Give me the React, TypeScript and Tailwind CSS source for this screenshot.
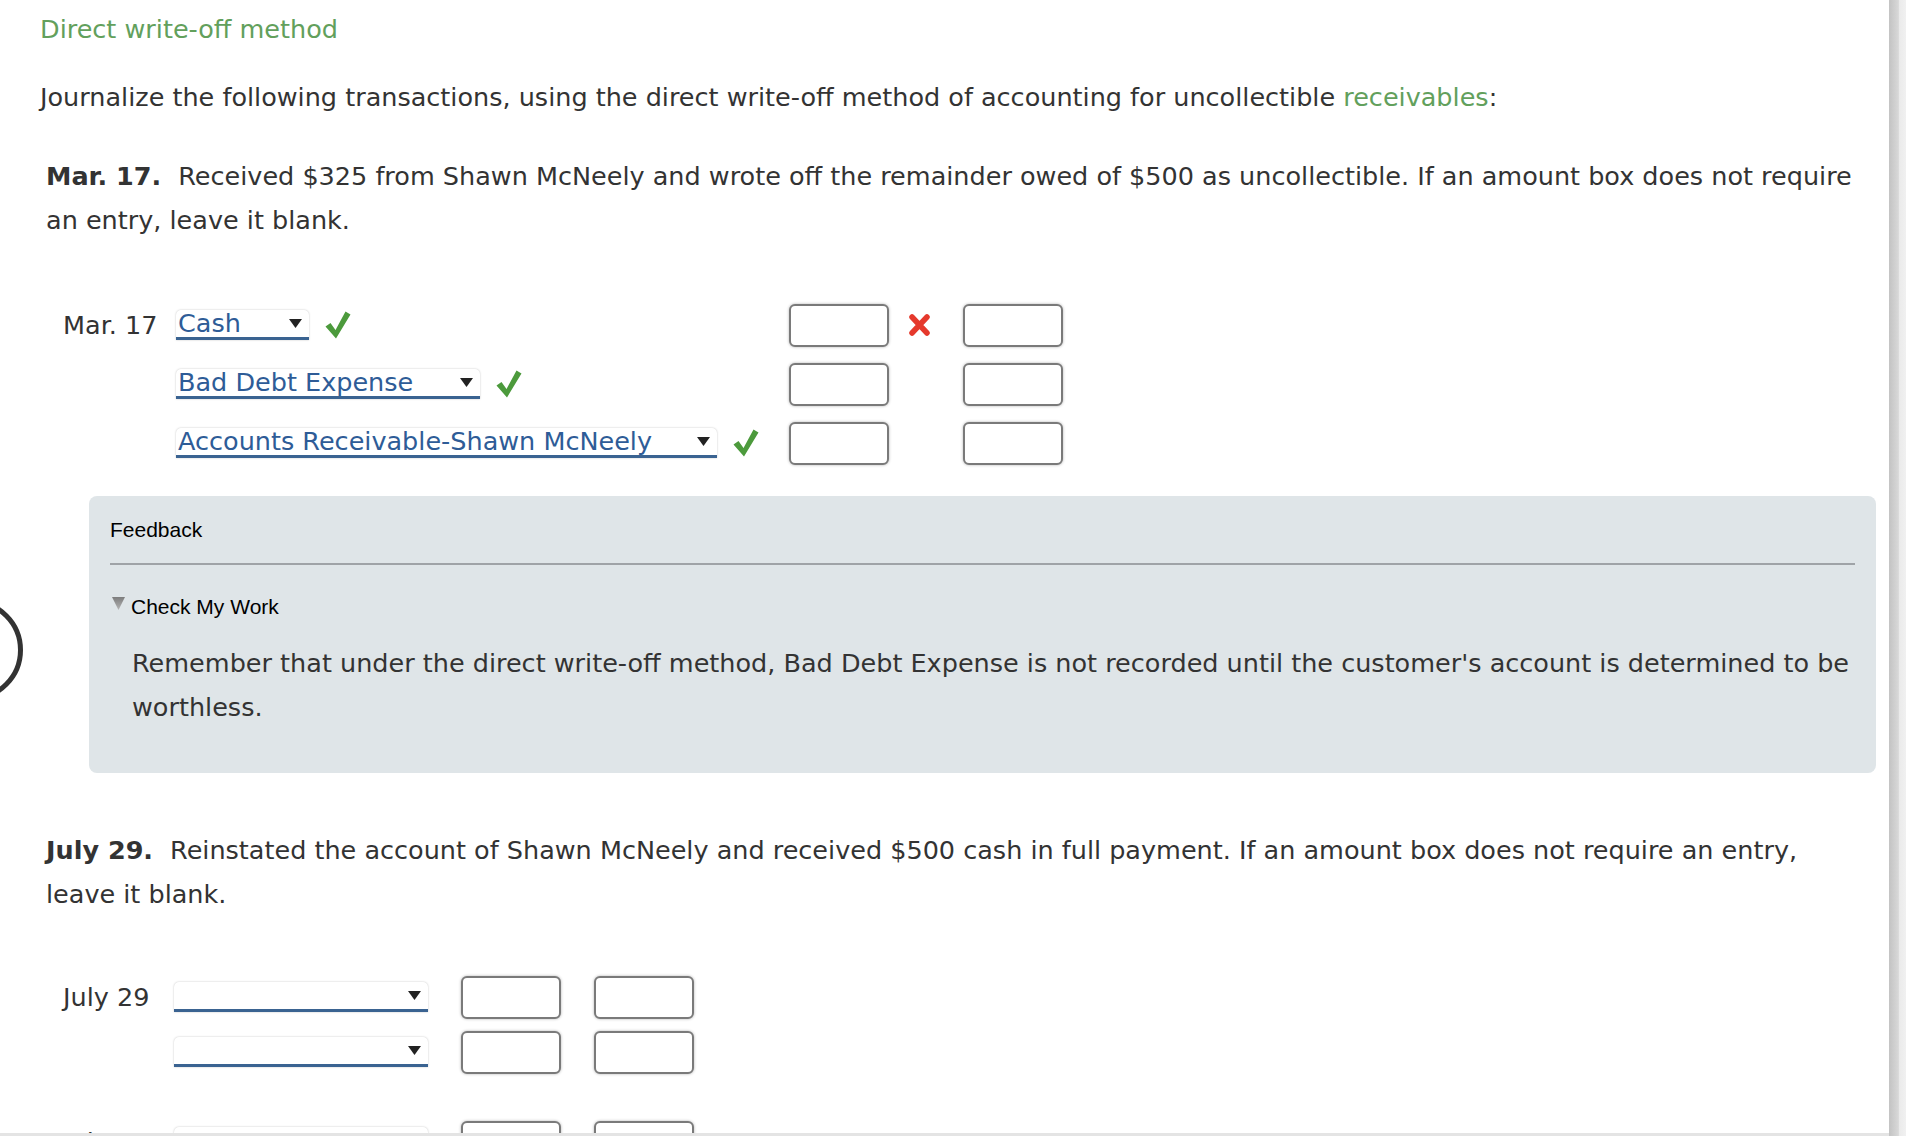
import React from "react";

const body = "font-['DejaVu_Sans',Verdana,sans-serif]";
const arial = "font-['Liberation_Sans',Arial,sans-serif]";

function Check() {
  return (
    <svg width="26" height="28" viewBox="0 0 26 28" className="shrink-0">
      <path d="M0.5 15.5 L5.5 12 L10.5 19 L20.5 0.5 L25.5 3.5 L11 27.5 Z" fill="#4c9a3c" />
    </svg>
  );
}

function Cross() {
  return (
    <svg width="21" height="22" viewBox="0 0 21 22" className="shrink-0">
      <path d="M3 3 L18 19 M18 3 L3 19" stroke="#e5392c" strokeWidth="5.5" strokeLinecap="round" />
    </svg>
  );
}

function Select({ value, width }: { value?: string; width: number }) {
  return (
    <div
      className="relative flex h-[30px] shrink-0 items-end rounded-t-[5px] bg-white border-b-[3px] border-[#3a6391] shadow-[0_0_2px_rgba(0,0,0,0.25)]"
      style={{ width }}
    >
      <span className="pl-[2px] text-[25.5px] leading-[28px] text-[#2e5c97] whitespace-nowrap">{value}</span>
      <svg width="13" height="9" viewBox="0 0 13 9" className="absolute right-[7px] top-[9px]">
        <path d="M0 0 H13 L6.5 9 Z" fill="#222" />
      </svg>
    </div>
  );
}

function Amount() {
  return (
    <div className="h-[43px] w-[100px] shrink-0 rounded-[6px] border-2 border-[#7a7a7a] bg-white shadow-[0_0_3px_rgba(0,0,0,0.3)]" />
  );
}

function MarRow({
  label,
  account,
  width,
  wrong,
}: {
  label?: string;
  account: string;
  width: number;
  wrong?: boolean;
}) {
  return (
    <div className="flex h-[44px] items-center">
      <div className="w-[136px] shrink-0 pl-[23px] text-[25.5px] text-[#333] whitespace-nowrap">{label}</div>
      <div className="flex w-[613px] shrink-0 items-center gap-[16px]">
        <Select value={account} width={width} />
        <Check />
      </div>
      <Amount />
      <div className="flex w-[74px] shrink-0 items-center pl-[20px]">{wrong && <Cross />}</div>
      <Amount />
    </div>
  );
}

function JulyRow({ label }: { label?: string }) {
  return (
    <div className="flex h-[44px] items-center">
      <div className="w-[134px] shrink-0 pl-[23px] text-[25.5px] text-[#333] whitespace-nowrap">{label}</div>
      <div className="w-[287px] shrink-0">
        <Select width={254} />
      </div>
      <Amount />
      <div className="w-[33px] shrink-0" />
      <Amount />
    </div>
  );
}

export default function App() {
  return (
    <div className={`relative flex h-[1136px] w-[1906px] overflow-hidden bg-white ${body}`}>
      <main className="flex min-w-0 flex-1 flex-col">
        <div className="flex-1 overflow-hidden pl-[40px] pr-[13px] pt-[7px] text-[25.5px] leading-[44px] text-[#333]">
          <div className="text-[#62a05c]">Direct write-off method</div>
          <p className="mt-[24px] pr-[12px]">
            Journalize the following transactions, using the direct write-off method of accounting for uncollectible{" "}
            <span className="text-[#62a05c]">receivables</span>:
          </p>

          <p className="mt-[35px] pl-[6px] pr-[12px]">
            <strong className="mr-[17px]">Mar. 17.</strong>Received $325 from Shawn McNeely and wrote off the remainder
            owed of $500 as uncollectible. If an amount box does not require an entry, leave it blank.
          </p>

          <div className="mt-[61px] flex flex-col gap-[15px] leading-normal">
            <MarRow label="Mar. 17" account="Cash" width={133} wrong />
            <MarRow account="Bad Debt Expense" width={304} />
            <MarRow account="Accounts Receivable-Shawn McNeely" width={541} />
          </div>

          <section className="ml-[49px] mt-[31px] rounded-[8px] bg-[#dfe5e8] px-[21px] pb-[44px] pt-[22px]">
            <div className={`${arial} text-[21px] leading-[24px] text-black`}>Feedback</div>
            <div className="mt-[21px] h-[2px] bg-[#9fa3a7]" />
            <div className={`${arial} mt-[30px] flex items-center gap-[6px] pl-[2px] text-[21px] leading-[24px] text-black`}>
              <svg width="13" height="13" viewBox="0 0 13 13" className="-mt-[8px]">
                <defs>
                  <linearGradient id="tri" x1="0" y1="0" x2="0" y2="1">
                    <stop offset="0" stopColor="#7d7d7d" />
                    <stop offset="1" stopColor="#b4b4b4" />
                  </linearGradient>
                </defs>
                <path d="M0 0 H13 L6.5 13 Z" fill="url(#tri)" />
              </svg>
              <span>Check My Work</span>
            </div>
            <p className="mt-[22px] pl-[22px] text-[#333]">
              Remember that under the direct write-off method, Bad Debt Expense is not recorded until the customer's
              account is determined to be worthless.
            </p>
          </section>

          <p className="mt-[55px] pl-[6px] pr-[12px]">
            <strong className="mr-[17px]">July 29.</strong>Reinstated the account of Shawn McNeely and received $500 cash
            in full payment. If an amount box does not require an entry, leave it blank.
          </p>

          <div className="mt-[59px] flex flex-col gap-[11px] leading-normal">
            <JulyRow label="July 29" />
            <JulyRow />
          </div>
          <div className="mt-[46px] flex flex-col leading-normal">
            <JulyRow label="July 29" />
          </div>
        </div>
        <div className="h-[3px] shrink-0 bg-[#e4e4e4]" />
      </main>
      <div className="w-[17px] shrink-0 bg-[linear-gradient(to_right,#c3c3c3,#d8d8d8_55%,#ebebeb_62%,#f1f1f1)]" />
      <div className="absolute left-[-79px] top-[599px] h-[102px] w-[102px] rounded-full border-[5px] border-[#333]" />
    </div>
  );
}
